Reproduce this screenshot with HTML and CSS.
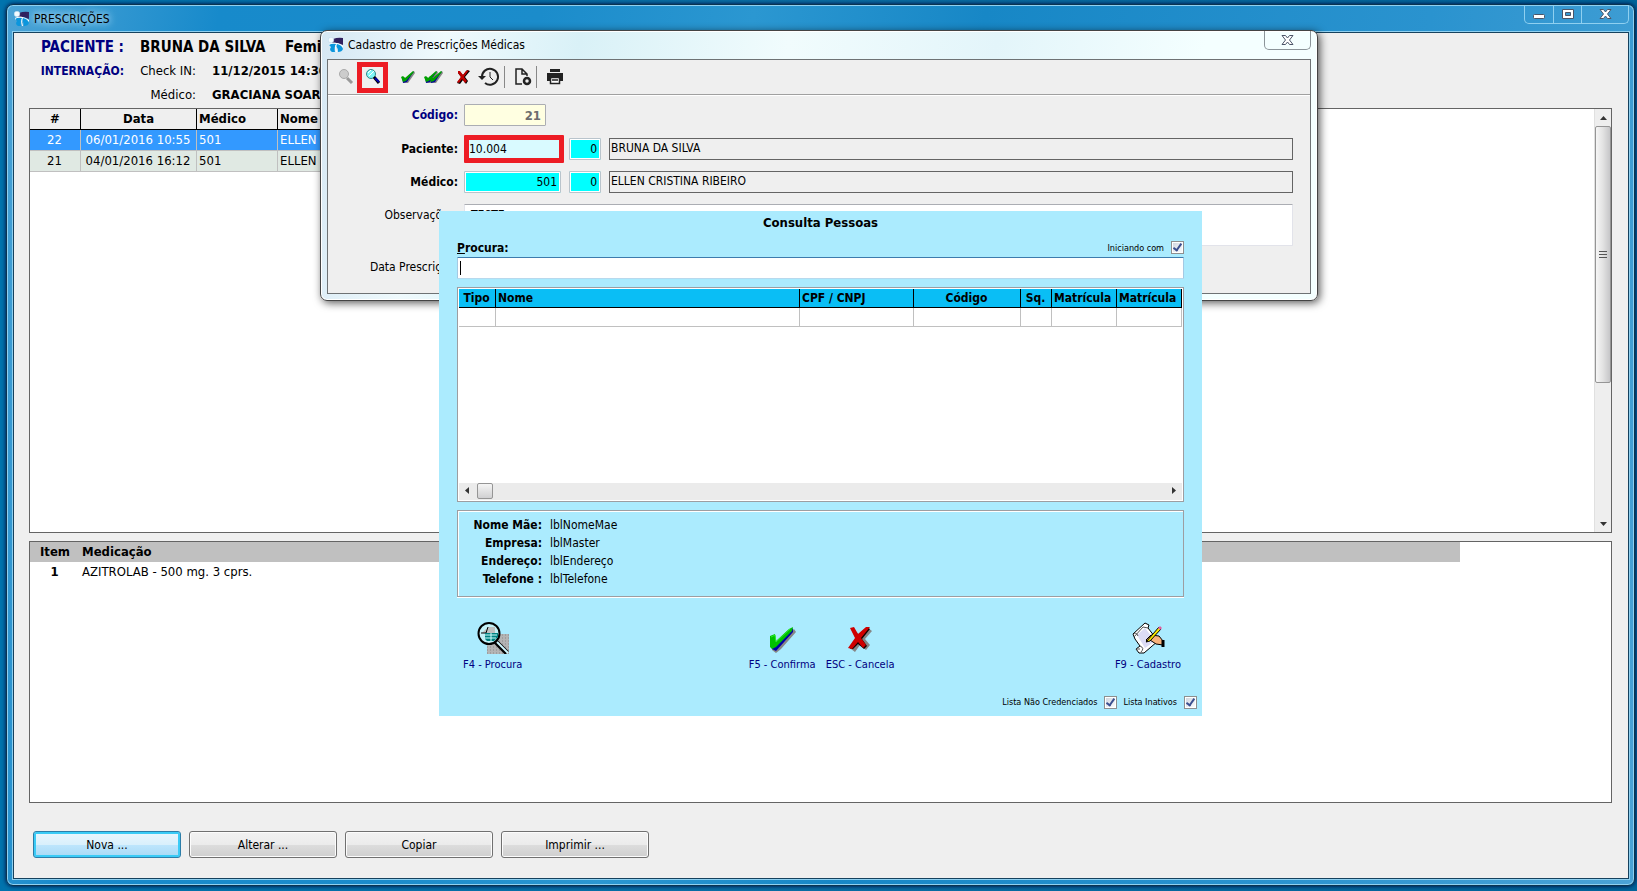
FILE: index.html
```html
<!DOCTYPE html>
<html lang="pt-BR">
<head>
<meta charset="utf-8">
<title>Prescrições</title>
<link rel="stylesheet" href="styles.css">
</head>
<body>
<svg class="defs" width="0" height="0" aria-hidden="true">
  <symbol id="logo" viewBox="0 0 16 16">
    <path d="M5 2Q10 0 15 1V8L10 6L4 6Z" fill="#30205f"/>
    <path d="M1 7Q6 3 15 9V11Q8 6 1 9Z" fill="#fff"/>
    <path d="M1 8Q4 6 8 7Q6 10 7 15H4Q2 14 2 12L3 10Z" fill="#0b96dd"/>
    <path d="M9 7Q14 8 15 12Q14 15 10 15Q10 11 8 9Z" fill="#0b96dd"/>
    <path d="M8 8Q7 11 8.500 15" fill="none" stroke="#fff"/>
    <circle cx="3" cy="3" r="2.800" fill="#f4fbff" stroke="#b5d5e8" stroke-width=".5"/>
  </symbol>
  <symbol id="check" viewBox="0 0 16 16">
    <path d="M3 8L6 9L14 2L15 4L8 14L3 14Z" fill="#858585"/>
    <path d="M2 8L5 10L14 2L7 13L3 14Z" fill="#0000a0"/>
    <path d="M1 8L3 7L5 9L13 2L14 3L6 12L3 13Z" fill="#00a000"/>
  </symbol>
  <symbol id="cross" viewBox="0 0 14 16">
    <path d="M3 2L7 6L11 1L14 2L9 8L12 12L10 15L7 11L4 15L1 14L5 8L2 4Z" fill="#000"/>
    <path d="M2 2L4 2L7 6L10 2L13 1L8 8L11 12L9 14L6 10L3 14L1 13L5 8L2 4Z" fill="#c00000"/>
  </symbol>
  <symbol id="bigcheck" viewBox="0 0 27 27">
    <path d="M3 11L9 15L25 2L27 5L12 22L7 26L3 23Z" fill="#868686"/>
    <path d="M1 10L7 17L24 1L24 5L7 24L3 22Z" fill="#0000a8"/>
    <path d="M1 9L6 7L7 14L20 2L24 0L23 4L7 20L3 22L1 20Z" fill="#00c000"/>
    <path d="M2 10L6 8L7 15L21 2" fill="none" stroke="#28ee28"/>
  </symbol>
  <symbol id="bigcross" viewBox="0 0 25 25">
    <path d="M6 3L12 8L20 1L24 4L17 12L22 18L18 23L12 18L7 25L3 22L9 13Z" fill="#868686"/>
    <path d="M4 2L10 8L19 0L22 2L14 12L19 19L16 22L10 17L5 22L2 22L8 12Z" fill="#100000"/>
    <path d="M2 1L6 0L10 7L18 0L22 0L13 11L18 18L15 21L10 15L4 22L0 21L7 11Z" fill="#cf0000"/>
  </symbol>
</svg>

<main class="window">
  <header class="titlebar">
    <svg class="logo"><use href="#logo"/></svg>
    <h1 class="caption">PRESCRIÇÕES</h1>
    <div class="wbuttons">
      <button class="wbtn" aria-label="Minimizar"><svg width="28" height="18"><rect x="8.500" y="9.500" width="11" height="4" rx="1" fill="#fff" stroke="#4b5568"/></svg></button>
      <button class="wbtn" aria-label="Maximizar"><svg width="27" height="18"><path d="M8.500 4.500H19.500V13.500H8.500ZM11.500 7.500V10.500H16.500V7.500Z" fill="#fff" stroke="#4b5568"/></svg></button>
      <button class="wbtn wclose" aria-label="Fechar"><svg width="46" height="18"><path d="M18 4.500H21.500L23.500 7L25.500 4.500H29L25.500 9L29 13.500H25.500L23.500 11L21.500 13.500H18L21.500 9Z" fill="#fff" stroke="#4b5568"/></svg></button>
    </div>
  </header>

  <div class="client">
    <div class="patient">
      <div class="pline big"><span class="plabel navy">PACIENTE :</span><span class="pval">BRUNA DA SILVA</span><span class="psex">Feminino</span></div>
      <div class="pline"><span class="plabel navy">INTERNAÇÃO:</span><span class="psub">Check IN:</span><b>11/12/2015 14:30</b></div>
      <div class="pline"><span class="plabel"></span><span class="psub">Médico:</span><b>GRACIANA SOARES</b></div>
    </div>

    <section class="panel list">
      <table class="grid">
        <colgroup><col class="c-num"><col class="c-date"><col class="c-med"><col></colgroup>
        <thead><tr><th>#</th><th>Data</th><th class="l">Médico</th><th class="l">Nome</th></tr></thead>
        <tbody>
          <tr class="sel"><td class="c">22</td><td class="c">06/01/2016 10:55</td><td>501</td><td>ELLEN CRISTINA</td></tr>
          <tr class="alt"><td class="c">21</td><td class="c">04/01/2016 16:12</td><td>501</td><td>ELLEN CRISTINA</td></tr>
        </tbody>
      </table>
      <div class="vscroll">
        <svg width="16" height="17"><path d="M5 11L8.500 7L12 11Z" fill="#333"/></svg>
        <div class="vthumb"><i></i><i></i><i></i></div>
        <svg class="down" width="16" height="17"><path d="M5 7H12L8.500 11Z" fill="#333"/></svg>
      </div>
    </section>

    <section class="panel meds">
      <table class="medtable">
        <colgroup><col class="c-item"><col></colgroup>
        <thead><tr><th>Item</th><th class="l">Medicação</th></tr></thead>
        <tbody><tr><td class="c"><b>1</b></td><td>AZITROLAB - 500 mg. 3 cprs.</td></tr></tbody>
      </table>
    </section>

    <div class="actions">
      <button class="btn default">Nova ...</button>
      <button class="btn">Alterar ...</button>
      <button class="btn">Copiar</button>
      <button class="btn">Imprimir ...</button>
    </div>
  </div>
</main>

<section class="dialog">
  <header class="dtitle">
    <svg class="logo"><use href="#logo"/></svg>
    <h2 class="caption">Cadastro de Prescrições Médicas</h2>
    <button class="dclose" aria-label="Fechar"><svg width="44" height="17"><path d="M17 4.500H20.500L22.500 7L24.500 4.500H28L24.500 9L28 13.500H24.500L22.500 11L20.500 13.500H17L20.500 9Z" fill="#fff" stroke="#4b5568"/></svg></button>
  </header>
  <div class="dclient">
    <div class="toolbar">
      <button class="tool" aria-label="Procurar"><svg width="18" height="18"><circle cx="7" cy="6" r="4.500" fill="#ccc" stroke="#aaa"/><path d="M10 10L15 15" stroke="#999" stroke-width="3"/></svg></button>
      <button class="tool marked" aria-label="Consultar"><svg width="18" height="18"><circle cx="7" cy="6" r="4.500" fill="#7ff6f6" stroke="#388"/><path d="M4 5L7 2M5 8L10 3" stroke="#fff"/><path d="M10 9L15 15" stroke="#000" stroke-width="3"/><path d="M11 10L15 14" stroke="#0000b0" stroke-width="2"/></svg></button>
      <button class="tool t-check" aria-label="Confirmar"><svg width="16" height="16"><use href="#check"/></svg></button>
      <button class="tool t-double" aria-label="Confirmar todos"><svg width="21" height="16"><use href="#check" width="16" height="16"/><use href="#check" x="5" width="16" height="16"/></svg></button>
      <button class="tool t-cross" aria-label="Cancelar"><svg width="14" height="16"><use href="#cross"/></svg></button>
      <button class="tool t-clock" aria-label="Histórico"><svg width="22" height="20" fill="none" stroke="#222" stroke-width="2"><path d="M4 10A8 8 0 1 1 7 16"/><path d="M12 5V10L15 13" stroke-width="1"/><path d="M0 9H8L4 13Z" fill="#222" stroke="none"/></svg></button>
      <span class="sep"></span>
      <button class="tool" aria-label="Novo documento"><svg width="18" height="18" fill="none" stroke="#222" stroke-width="1.500"><path d="M8 16H2V1H8L13 6V8M8 1V6H13"/><circle cx="13" cy="13" r="3" stroke-width="2.500"/></svg></button>
      <span class="sep"></span>
      <button class="tool" aria-label="Imprimir"><svg width="18" height="18"><path d="M4 1H14V4H4ZM1 5H17V13H14V9H4V13H1Z" fill="#222"/><path d="M4.500 9.500H13.500V15.500H4.500ZM6 12H12" fill="#fff" stroke="#222" stroke-width="1.500"/></svg></button>
    </div>

    <form class="form">
      <label class="flabel navy b" for="cod">Código:</label>
      <div class="frow"><input id="cod" class="in cod" value="21"></div>
      <label class="flabel b" for="pac">Paciente:</label>
      <div class="frow"><input id="pac" class="in pac" value="10.004"><input class="in seq" aria-label="Sequência do paciente" value="0"><output class="out">BRUNA DA SILVA</output></div>
      <label class="flabel b" for="med">Médico:</label>
      <div class="frow"><input id="med" class="in med" value="501"><input class="in seq" aria-label="Sequência do médico" value="0"><output class="out">ELLEN CRISTINA RIBEIRO</output></div>
      <label class="flabel top" for="obs">Observações:</label>
      <textarea id="obs" class="in obs">TESTE</textarea>
      <span class="flabel">Data Prescrição:</span>
    </form>
  </div>
</section>

<section class="lookup">
  <h2 class="ltitle">Consulta Pessoas</h2>
  <div class="lsearch">
    <label class="b" for="proc"><u>P</u>rocura:</label>
    <label class="small">Iniciando com <input type="checkbox" class="chk" checked></label>
  </div>
  <input id="proc" class="in proc">
  <div class="results">
    <table class="rgrid">
      <colgroup><col class="r-tipo"><col><col class="r-cpf"><col class="r-cod"><col class="r-sq"><col class="r-mat"><col class="r-mat"></colgroup>
      <thead><tr><th>Tipo</th><th class="l">Nome</th><th class="l">CPF / CNPJ</th><th>Código</th><th>Sq.</th><th class="l">Matrícula</th><th class="l">Matrícula</th></tr></thead>
      <tbody><tr><td></td><td></td><td></td><td></td><td></td><td></td><td></td></tr></tbody>
    </table>
    <div class="hscroll">
      <svg width="17" height="16"><path d="M10 4V11L6 7.500Z" fill="#333"/></svg>
      <span class="hthumb"></span>
      <svg class="right" width="17" height="16"><path d="M7 4V11L11 7.500Z" fill="#333"/></svg>
    </div>
  </div>
  <dl class="info">
    <dt>Nome Mãe:</dt><dd>lblNomeMae</dd>
    <dt>Empresa:</dt><dd>lblMaster</dd>
    <dt>Endereço:</dt><dd>lblEndereço</dd>
    <dt>Telefone :</dt><dd>lblTelefone</dd>
  </dl>
  <div class="lactions">
    <button class="lbtn"><svg width="32" height="32"><path d="M10 12H32V32H10Z" fill="#b4b4b4"/><path d="M10 13H32M10 16H32M10 19H32M10 22H32M10 25H32M10 28H32M10 31H32" stroke="#888" stroke-dasharray="1 2"/><circle cx="12" cy="11.500" r="10.500" fill="#c3f1f8" stroke="#000" stroke-width="2"/><path d="M5 11L11 5H18V11Z" fill="#c0c0c0"/><path d="M4 11H9L11 5" fill="none" stroke="#000"/><path d="M8 11H21V15L17 19H10L8 17Z" fill="#008080"/><path d="M8 13H20M8 16H19M14 11V19" stroke="#cff"/><path d="M18 19L30 31" stroke="#000" stroke-width="5"/><path d="M20 20L31 31" stroke="#d0f8ff" stroke-width="2"/></svg>F4 - Procura</button>
    <div class="lpair">
      <button class="lbtn"><svg width="27" height="32" viewBox="0 -5 27 32"><use href="#bigcheck" width="27" height="27"/></svg>F5 - Confirma</button>
      <button class="lbtn"><svg width="25" height="32" viewBox="0 -5 25 32"><use href="#bigcross" width="25" height="25"/></svg>ESC - Cancela</button>
    </div>
    <button class="lbtn"><svg width="34" height="32"><path d="M2 12L14 1L18 3L17 6L27 19L13 31L8 31L5 27L9 24L4 17Z" fill="#fff" stroke="#000"/><path d="M6 13L14 6L24 19L14 26Z" fill="#dcdcf5"/><path d="M2 13Q5 9 7 14M17 6L12 5L3 15M9 24Q14 26 10 30M5 27L9 27" fill="none" stroke="#555"/><path d="M20 13L28 14L32 19V23L25 22L19 18L16 19L15 18Z" fill="#f8b27c" stroke="#000"/><path d="M15 20L28 5L30 7L19 19Z" fill="#f8e800" stroke="#000"/><path d="M27 6L29 4L31 6L29 8Z" fill="#e060a0"/><path d="M32 18V25" stroke="#000" stroke-width="3"/></svg>F9 - Cadastro</button>
  </div>
  <div class="lfoot">
    <label class="small">Lista Não Credenciados <input type="checkbox" class="chk" checked></label>
    <label class="small">Lista Inativos <input type="checkbox" class="chk" checked></label>
  </div>
</section>
</body>
</html>
```

FILE: styles.css
```css
* { box-sizing: border-box; }
html, body { height: 100%; }
body {
  margin: 0;
  padding: 4px 2px 5px 6px;
  background: linear-gradient(90deg, #0073ad, #0a6ea4 50%, #00649a);
  font: 12px/16px "DejaVu Sans Condensed", "Noto Sans", sans-serif;
  color: #000;
  overflow: hidden;
}
button, input, textarea { font: inherit; color: inherit; margin: 0; }
button { padding: 0; border: 0; background: none; }
h1, h2 { margin: 0; font-weight: normal; }
.defs { position: absolute; }
.b { font-weight: bold; }
b { font-weight: bold; font-size: 13px; }
.navy { color: #000080; }
.logo { width: 16px; height: 16px; }

/* Main window */
.window {
  height: 100%;
  display: flex;
  flex-direction: column;
  padding: 0 5px 6px 6px;
  border: 1px solid #0b3450;
  border-radius: 7px;
  box-shadow: inset 0 0 0 1px #8fd0f0, 0 0 4px #003;
  background: linear-gradient(100deg, #4ba3d6, #178acb 12%, #1b8ccb 30%, #2b97d1 42%, #1787c6 55%, #2a93cf 80%, #4ba3d6);
}
.titlebar { display: flex; align-items: center; height: 27px; padding-left: 1px; flex: none; }
.caption { font-size: 12px; margin-left: 4px; }
.titlebar .caption { text-shadow: 0 0 6px #bfe4f7, 0 0 10px #bfe4f7; }
.wbuttons {
  display: flex;
  align-self: flex-start;
  margin-left: auto;
  border: 1px solid #8fd0f0;
  border-top: 0;
  border-radius: 0 0 5px 5px;
  height: 19px;
}
.wbtn { display: flex; border-right: 1px solid #8fd0f0; }
.wbtn:last-child { border-right: 0; }
.client {
  flex: 1;
  min-height: 0;
  display: flex;
  flex-direction: column;
  padding: 2px 16px 20px 15px;
  border: 1px solid #16425e;
  outline: 1px solid #8fd0f0;
  background: #efefef;
}
.patient { height: 73px; flex: none; display: flex; flex-direction: column; }
.pline { display: flex; align-items: center; height: 24px; white-space: nowrap; font-size: 13px; }
.pline.big { font-size: 15px; font-weight: bold; }
.plabel { width: 95px; text-align: right; font-weight: bold; }
.pline:not(.big) .plabel { font-size: 12px; }
.pval { margin-left: 16px; width: 145px; }
.psub { width: 72px; text-align: right; margin-right: 16px; }

.panel { display: flex; border: 1px solid #646464; background: #fff; }
.list { flex: 425 1 0; min-height: 0; }
.meds { flex: 262 1 0; min-height: 0; margin-top: 8px; align-items: flex-start; }
table { border-collapse: separate; border-spacing: 0; table-layout: fixed; }
td, th { padding: 0 3px; height: 21px; text-align: left; white-space: nowrap; overflow: hidden; font-size: 13px; }
th { text-align: center; }
th.l { text-align: left; padding-left: 2px; }
td.c { text-align: center; }
.grid { align-self: flex-start; width: 60%; }
.grid th { background: #efefef; border-right: 1px solid #000; border-bottom: 1px solid #000; }
.grid td { padding-left: 2px; border-right: 1px solid #c0c0c0; border-bottom: 1px solid #c0c0c0; }
.sel td { background: #3399ff; color: #fff; }
.alt td { background: #e0e9e3; }
.c-num { width: 51px; }
.c-date { width: 116px; }
.c-med { width: 81px; }
.vscroll { width: 17px; margin-left: auto; display: flex; flex-direction: column; background: #eee; border-left: 1px solid #e0e0e0; }
.vthumb {
  flex: 0 1 257px;
  display: flex;
  flex-direction: column;
  align-items: center;
  justify-content: center;
  gap: 2px;
  border: 1px solid #959595;
  border-radius: 2px;
  background: linear-gradient(90deg, #f6f6f6, #e2e2e2 50%, #c6c6c8);
}
.vthumb i { width: 8px; height: 1px; background: #555; }
.down { margin-top: auto; }
.medtable { width: 100%; max-width: 1430px; }
.medtable th { height: 20px; background: #c0c0c0; }
.medtable td { padding-left: 2px; }
.c-item { width: 50px; }

.actions { display: flex; gap: 8px; padding: 28px 4px 0; flex: none; }
.btn {
  width: 148px;
  height: 27px;
  border: 1px solid #707070;
  border-radius: 3px;
  box-shadow: inset 0 0 0 1px #fcfcfc;
  background: linear-gradient(#f2f2f2, #ebebeb 50%, #dddddd 50%, #cfcfcf);
}
.btn.default {
  border-color: #2c7da8;
  box-shadow: inset 0 0 0 2px #3acbf6;
  background: linear-gradient(#eaf6fd, #d9f0fc 50%, #bee6fd 50%, #a7d9f5);
}

/* Prescription dialog */
.dialog {
  position: absolute;
  left: 320px;
  right: 319px;
  top: 30px;
  padding: 0 6px 6px;
  border: 1px solid #444;
  border-radius: 7px;
  box-shadow: inset 0 0 0 1px #fff, 2px 2px 9px rgba(0, 0, 0, .65);
  background: linear-gradient(100deg, #d5e7f3, #effafd 12%, #d9f1f7 25%, #f1fcfd 45%, #e3f5fa 65%, #f4ffff 85%);
}
.dtitle { display: flex; align-items: center; height: 28px; padding-left: 1px; }
.dclose {
  display: flex;
  align-self: flex-start;
  margin-left: auto;
  width: 47px;
  height: 19px;
  border: 1px solid #8b9499;
  border-top: 0;
  border-radius: 0 0 5px 5px;
}
.dclient { border: 1px solid #6e7274; background: #efefef; height: 235px; }
.toolbar { display: flex; align-items: center; height: 35px; padding-left: 9px; border-bottom: 1px solid #a0a0a0; box-shadow: 0 1px #fff; }
.tool { display: flex; justify-content: center; align-items: center; }
.marked { border: 5px solid #ed1c24; margin-left: 2px; height: 31px; width: 31px; }
.t-check { margin-left: 12px; }
.t-double { margin-left: 7px; }
.t-cross { margin-left: 12px; }
.t-clock { margin-left: 8px; }
.sep { width: 1px; height: 22px; margin-left: 4px; background: #888; }
.sep + .tool { margin-left: 9px; }
.form {
  display: grid;
  grid-template-columns: 130px 1fr;
  grid-template-rows: 24px 22px 22px 42px 20px;
  gap: 11px 6px;
  align-items: center;
  padding: 8px 17px 0 0;
}
.flabel { text-align: right; white-space: nowrap; }
.flabel.top { align-self: start; padding-top: 3px; }
.frow { display: flex; align-items: center; gap: 8px; }
.in { height: 22px; padding: 0 4px; border: 1px solid #b9c4cc; border-radius: 1px; background: #fff; outline: 0; }
.cod { width: 82px; text-align: right; background: #ffffe1; color: #6d6d6d; font-weight: bold; font-size: 13px; border: 1px solid #abadb3; }
.pac { width: 100px; height: 28px; border: 5px solid #ed1c24; padding: 0; background: #d9faff; margin-right: -3px; }
.med, .seq { background: #00ffff; text-align: right; box-shadow: inset 0 0 0 1px #fff; padding-right: 3px; }
.med { width: 97px; }
.seq { width: 32px; }
.out { flex: 1; height: 22px; padding: 1px; border: 1px solid #646464; }
.obs { width: 100%; height: 42px; resize: none; border-color: #abadb3 #e2e3ea #e2e3ea; padding: 2px 6px; }

/* People lookup */
.lookup {
  position: absolute;
  left: 439px;
  top: 211px;
  width: 763px;
  padding: 4px 18px 6px;
  background: #abebfe;
}
.ltitle { font-size: 13px; font-weight: bold; text-align: center; line-height: 16px; }
.lsearch { display: flex; justify-content: space-between; align-items: center; height: 26px; padding-top: 7px; }
.small { display: flex; align-items: center; gap: 7px; font-size: 9px; }
.chk {
  appearance: none;
  width: 13px;
  height: 13px;
  margin: 0;
  border: 1px solid #8e8f8f;
  background: linear-gradient(135deg, #cdd3de, #fff);
  box-shadow: inset 0 0 0 1px #fff;
  display: flex;
  justify-content: center;
}
.chk:checked::after { content: ""; box-sizing: border-box; width: 5px; height: 9px; border: solid #3b4f8f; border-width: 0 2px 2px 0; transform: rotate(35deg); }
.proc {
  display: block;
  width: 100%;
  border-color: #3d7bad #a4c9e3 #b7d9ed;
  padding: 0 2px;
  background: linear-gradient(#000, #000) 2px 3px / 1px 14px no-repeat #fff;
}
.proc:focus { background: #fff; }
.results { display: flex; flex-direction: column; margin-top: 8px; height: 215px; padding: 1px; border: 1px solid #9d9da1; background: #fff; }
.rgrid { width: 100%; }
.rgrid th { height: 19px; padding-left: 2px; font-size: 12px; background: #0abef5; border-right: 1px solid #000; border-bottom: 1px solid #000; }
.rgrid td { height: 19px; border-right: 1px solid #c0c0c0; border-bottom: 1px solid #c0c0c0; }
.r-tipo { width: 37px; }
.r-cpf { width: 114px; }
.r-cod { width: 107px; }
.r-sq { width: 31px; }
.r-mat { width: 65px; }
.hscroll { display: flex; margin-top: auto; height: 17px; background: #ebebeb; }
.hthumb { width: 16px; height: 16px; margin-left: 1px; border: 1px solid #959595; border-radius: 2px; background: linear-gradient(#f5f5f5, #d0d0d2); }
.right { margin-left: auto; }
.info {
  display: grid;
  grid-template-columns: 84px 1fr;
  column-gap: 8px;
  row-gap: 1px;
  margin: 8px 0 0;
  padding: 6px 0 8px;
  border: 1px solid #9d9da1;
  box-shadow: inset 1px 1px #fff, 0 1px #fff;
}
.info dt { text-align: right; font-weight: bold; line-height: 17px; }
.info dd { margin: 0; }
.lactions { display: flex; justify-content: space-between; padding: 25px 3px 0 6px; }
.lpair { display: flex; gap: 10px; margin-left: 6px; }
.lbtn { display: flex; flex-direction: column; align-items: center; gap: 3px; font-size: 11px; color: #000080; white-space: nowrap; }
.lfoot { display: flex; justify-content: flex-end; gap: 6px; margin: 21px -13px 0 0; }
```
